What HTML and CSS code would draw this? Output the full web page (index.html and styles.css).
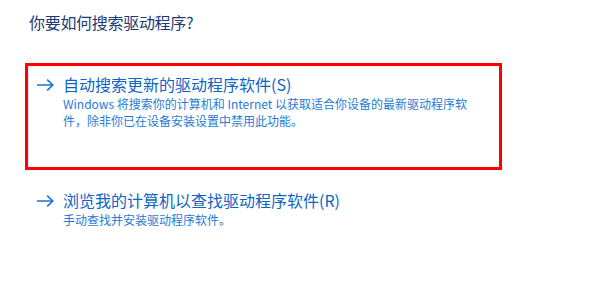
FILE: index.html
```html
<!DOCTYPE html>
<html lang="zh-CN">
<head>
<meta charset="utf-8">
<link rel="stylesheet" href="styles.css">
</head>
<body>
<div class="page">
  <h1 class="title">你要如何搜索驱动程序?</h1>
  <div class="options">
    <div class="option option-selected">
      <div class="option-inner">
        <svg class="arrow" width="17" height="12" viewBox="0 0 17 12"><path d="M0 6H15.6M10.2 0.7L15.8 6L10.2 11.3" fill="none" stroke="currentColor" stroke-width="1.6"/></svg>
        <div class="option-text">
          <div class="option-link">自动搜索更新的驱动程序软件(S)</div>
          <div class="option-desc">Windows 将搜索你的计算机和 Internet 以获取适合你设备的最新驱动程序软件，除非你已在设备安装设置中禁用此功能。</div>
        </div>
      </div>
    </div>
    <div class="option">
      <div class="option-inner plain">
        <svg class="arrow" width="17" height="12" viewBox="0 0 17 12"><path d="M0 6H15.6M10.2 0.7L15.8 6L10.2 11.3" fill="none" stroke="currentColor" stroke-width="1.6"/></svg>
        <div class="option-text">
          <div class="option-link">浏览我的计算机以查找驱动程序软件(R)</div>
          <div class="option-desc">手动查找并安装驱动程序软件。</div>
        </div>
      </div>
    </div>
  </div>
</div>
</body>
</html>
```

FILE: styles.css
```css
html, body {
  margin: 0;
  padding: 0;
  background: #ffffff;
}
body {
  font-family: "Noto Sans CJK SC", "Noto Sans", sans-serif;
}
.page {
  padding-top: 12px;
}
.title {
  margin: 0 0 30px 29px;
  font-size: 16px;
  line-height: 21px;
  font-weight: normal;
  color: #1c3a74;
  letter-spacing: -0.3px;
}
.options {
  display: flex;
  flex-direction: column;
  gap: 9px;
}
.option {
  margin-left: 25px;
  width: 477px;
  border: 3px solid transparent;
  box-sizing: border-box;
}
.option-selected {
  height: 107px;
  border-color: #ff0000;
}
.option-inner {
  display: flex;
  align-items: flex-start;
  height: 100%;
  box-sizing: border-box;
  padding: 8px 0 0 8px;
  border-left: 1px solid #d4e6f8;
}
.option-inner.plain {
  border-left-color: transparent;
}
.arrow {
  color: #1a74d2;
  margin-top: 5px;
  margin-right: 9px;
  flex: none;
}
.option-text {
  display: flex;
  flex-direction: column;
  gap: 1px;
}
.option-link {
  font-size: 16px;
  line-height: 20px;
  color: #0e64c4;
}
.option-desc {
  width: 415px;
  font-size: 12px;
  line-height: 17px;
  color: #1f7bd5;
}
```
